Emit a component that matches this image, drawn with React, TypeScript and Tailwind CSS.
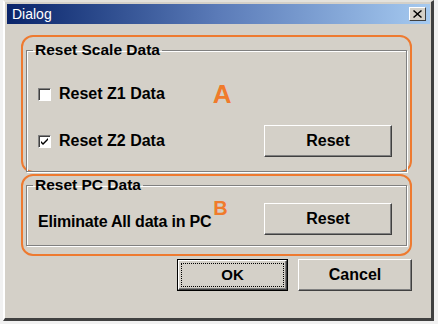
import React from 'react';

const font = { fontFamily: '"Liberation Sans", Arial, sans-serif' };

function CheckBox({ checked }: { checked?: boolean }) {
  return (
    <div className="w-[13px] h-[13px] bg-white border border-t-[#808080] border-l-[#808080] border-r-white border-b-white shadow-[inset_1px_1px_0_#404040] flex items-center justify-center">
      {checked && (
        <svg width="9" height="9" viewBox="0 0 9 9">
          <path d="M1 4 L3 6 L8 1 L8 3 L3 8 L1 6 Z" fill="#000" />
        </svg>
      )}
    </div>
  );
}

function Button({ label, width, isDefault }: { label: string; width: string; isDefault?: boolean }) {
  if (isDefault) {
    return (
      <div className={`${width} h-[32px] border border-black`}>
        <div className="w-full h-full border border-t-white border-l-white border-r-[#404040] border-b-[#404040] shadow-[inset_-1px_-1px_0_#808080] p-[2px]">
          <div className="w-full h-full border border-dotted border-black flex items-center justify-center text-[15px] font-bold text-black">
            {label}
          </div>
        </div>
      </div>
    );
  }
  return (
    <div className={`${width} h-[32px] border border-t-white border-l-white border-r-[#404040] border-b-[#404040] shadow-[inset_-1px_-1px_0_#808080] flex items-center justify-center text-[16px] font-bold text-black`}>
      {label}
    </div>
  );
}

export default function App() {
  return (
    <div className="w-[438px] h-[324px] bg-[#f1f1f1] pl-[3px] overflow-hidden" style={font}>
      <div className="w-[431px] h-[321px] bg-[#d4d0c8] border-t-2 border-l-2 border-t-[#e4e2dc] border-l-white border-r-[3px] border-b-[3px] border-r-[#404040] border-b-[#404040] pl-[2px] pt-[2px] pr-[1px] flex flex-col">
        {/* Title bar */}
        <div className="h-[20px] bg-gradient-to-r from-[#0a246a] via-[#5b7bb8] to-[#a6caf0] flex items-center justify-between pl-[5px] pr-[4px]">
          <span className="text-white text-[14px]">Dialog</span>
          <div className="w-[17px] h-[14px] bg-[#d4d0c8] border border-t-white border-l-white border-r-[#404040] border-b-[#404040] flex items-center justify-center">
            <svg width="9" height="8" viewBox="0 0 9 8">
              <path d="M1 0 L4.5 3 L8 0 L9 1 L5.5 4 L9 7 L8 8 L4.5 5 L1 8 L0 7 L3.5 4 L0 1 Z" fill="#000" />
            </svg>
          </div>
        </div>

        {/* Content */}
        <div className="flex-1 pl-[14px] pt-[11px]">
          {/* Group A */}
          <div className="w-[391px] h-[138px] border-[2.5px] border-[#ee7a30] rounded-[12px] px-[3px] pb-[3px]">
            <fieldset className="h-[131px] mt-[4px] border border-[#808080] shadow-[inset_1px_1px_0_#fff,1px_1px_0_#fff] pl-[11px] pr-[14px]">
              <legend className="-ml-[5px] px-[2px] text-[15.5px] font-bold text-black leading-[18px]">Reset Scale Data</legend>
              <div className="flex items-center h-[20px] mt-[25px]">
                <CheckBox />
                <span className="ml-[8px] text-[16px] font-bold text-black">Reset Z1 Data</span>
                <span className="ml-[48px] text-[26px] font-bold text-[#f07b2b] leading-none">A</span>
              </div>
              <div className="flex items-center justify-between h-[32px] mt-[21px]">
                <div className="flex items-center">
                  <CheckBox checked />
                  <span className="ml-[8px] text-[16px] font-bold text-black">Reset Z2 Data</span>
                </div>
                <Button label="Reset" width="w-[128px]" />
              </div>
            </fieldset>
          </div>

          {/* Group B */}
          <div className="w-[391px] h-[82px] mt-[1px] border-[2.5px] border-[#ee7a30] rounded-[12px] px-[3px]">
            <fieldset className="h-[70px] border border-[#808080] shadow-[inset_1px_1px_0_#fff,1px_1px_0_#fff] pl-[11px] pr-[14px]">
              <legend className="-ml-[5px] px-[2px] text-[15.5px] font-bold text-black leading-[18px]">Reset PC Data</legend>
              <div className="flex items-center justify-between h-[32px] mt-[9px]">
                <div className="flex items-start">
                  <span className="mt-[6px] text-[16px] font-bold text-black tracking-[-0.2px]">Eliminate All data in PC</span>
                  <span className="ml-[2px] -mt-[6px] text-[20px] font-bold text-[#f07b2b] leading-none">B</span>
                </div>
                <Button label="Reset" width="w-[128px]" />
              </div>
            </fieldset>
          </div>

          {/* Bottom buttons */}
          <div className="w-[391px] flex justify-end gap-[10px] mt-[3px]">
            <Button label="OK" width="w-[111px]" isDefault />
            <Button label="Cancel" width="w-[114px]" />
          </div>
        </div>
      </div>
    </div>
  );
}
